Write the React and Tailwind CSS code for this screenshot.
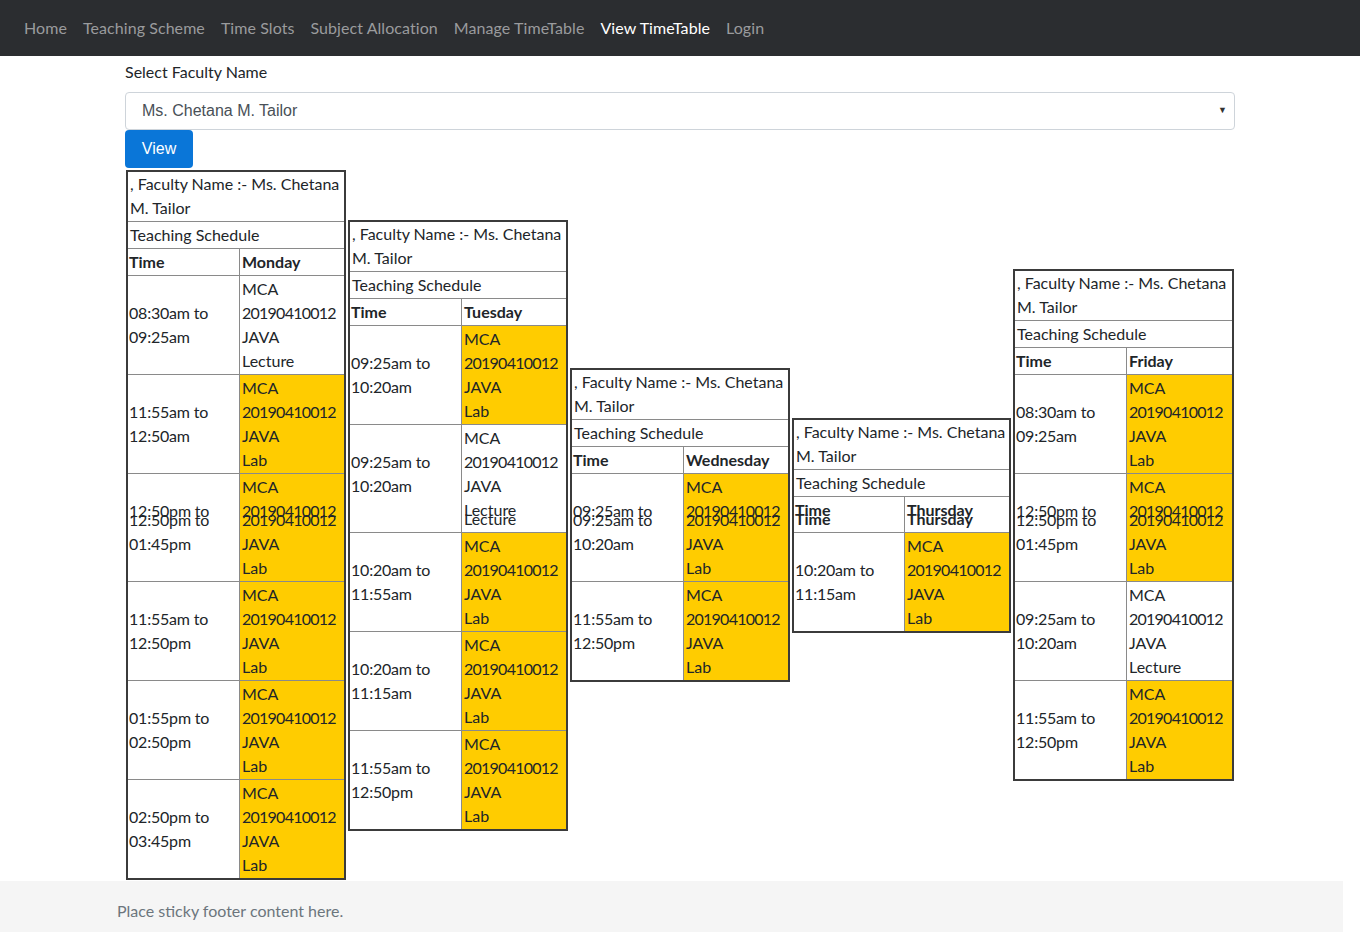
import React from "react";

const navItems = ["Home", "Teaching Scheme", "Time Slots", "Subject Allocation", "Manage TimeTable", "View TimeTable", "Login"];

const lecture = ["MCA", "20190410012", "JAVA", "Lecture"];
const lab = ["MCA", "20190410012", "JAVA", "Lab"];

const days = [
  {
    day: "Monday", w: "w-[220px]", tw: "w-[112px]",
    rows: [
      { time: ["08:30am to", "09:25am"], sub: lecture },
      { time: ["11:55am to", "12:50am"], sub: lab, yellow: true },
      { time: ["12:50pm to", "01:45pm"], sub: lab, yellow: true, dupTime: 0, dupSub: 1 },
      { time: ["11:55am to", "12:50pm"], sub: lab, yellow: true },
      { time: ["01:55pm to", "02:50pm"], sub: lab, yellow: true },
      { time: ["02:50pm to", "03:45pm"], sub: lab, yellow: true },
    ],
  },
  {
    day: "Tuesday", w: "w-[220px]", tw: "w-[112px]",
    rows: [
      { time: ["09:25am to", "10:20am"], sub: lab, yellow: true },
      { time: ["09:25am to", "10:20am"], sub: lecture, dupSub: 3, lift: true },
      { time: ["10:20am to", "11:55am"], sub: lab, yellow: true },
      { time: ["10:20am to", "11:15am"], sub: lab, yellow: true },
      { time: ["11:55am to", "12:50pm"], sub: lab, yellow: true },
    ],
  },
  {
    day: "Wednesday", w: "w-[220px]", tw: "w-[112px]",
    rows: [
      { time: ["09:25am to", "10:20am"], sub: lab, yellow: true, dupTime: 0, dupSub: 1 },
      { time: ["11:55am to", "12:50pm"], sub: lab, yellow: true },
    ],
  },
  {
    day: "Thursday", w: "w-[219px]", tw: "w-[111px]", dupHead: true,
    rows: [
      { time: ["10:20am to", "11:15am"], sub: lab, yellow: true },
    ],
  },
  {
    day: "Friday", w: "w-[221px]", tw: "w-[112px]",
    rows: [
      { time: ["08:30am to", "09:25am"], sub: lab, yellow: true },
      { time: ["12:50pm to", "01:45pm"], sub: lab, yellow: true, dupTime: 0, dupSub: 1 },
      { time: ["09:25am to", "10:20am"], sub: lecture },
      { time: ["11:55am to", "12:50pm"], sub: lab, yellow: true },
    ],
  },
];

// renders lines; the one at index `dup` is printed twice, overlapping (like the original page)
function Lines({ items, dup }) {
  return items.map((t, i) => {
    const cls = /^\d+$/.test(t) ? "tracking-[-0.75px]" : /\d/.test(t) ? "tracking-[-0.2px]" : "";
    return (
      <React.Fragment key={i}>
        <div className={cls}>{t}</div>
        {dup === i && <div className={`-mt-[15px] ${cls}`}>{t}</div>}
      </React.Fragment>
    );
  });
}

function DayTable({ data }) {
  return (
    <div className={`${data.w} shrink-0 border-2 border-[#3b3b3b] bg-white leading-6`}>
      <div className="pl-[2px] pb-px border-b border-[#8a8a8a]">, Faculty Name :- Ms. Chetana M. Tailor</div>
      <div className="pl-[2px] py-px border-b border-[#8a8a8a]">Teaching Schedule</div>
      <div className="flex border-b border-[#8a8a8a] font-bold">
        <div className={`${data.tw} shrink-0 border-r border-[#8a8a8a] py-px pl-px`}>
          <Lines items={["Time"]} dup={data.dupHead ? 0 : -1} />
        </div>
        <div className="flex-1 py-px pl-[2px]">
          <Lines items={[data.day]} dup={data.dupHead ? 0 : -1} />
        </div>
      </div>
      {data.rows.map((r, i) => (
        <div key={i} className={`flex ${i < data.rows.length - 1 ? "border-b border-[#8a8a8a]" : ""}`}>
          <div className={`${data.tw} shrink-0 border-r border-[#8a8a8a] py-px pl-px flex flex-col justify-center ${r.lift ? "pb-[9px]" : ""}`}>
            <Lines items={r.time} dup={r.dupTime ?? -1} />
          </div>
          <div className={`flex-1 py-px pl-[2px] ${r.yellow ? "bg-[#ffcc00]" : ""}`}>
            <Lines items={r.sub} dup={r.dupSub ?? -1} />
          </div>
        </div>
      ))}
    </div>
  );
}

export default function App() {
  return (
    <div className="h-[932px] overflow-hidden bg-white text-[#212529] text-base [font-family:Lato,sans-serif]">
      {/* Navbar */}
      <nav className="h-14 bg-[#2b2d30] flex items-center px-4">
        {navItems.map((n) => (
          <a key={n} className={`px-2 tracking-[0.07px] ${n === "View TimeTable" ? "text-white" : "text-[#9a9b9d]"}`}>{n}</a>
        ))}
      </nav>

      <div className="w-[1110px] mx-auto pt-1">
        <label className="block leading-6 mb-2">Select Faculty Name</label>
        <div className="h-[38px] border border-[#ced4da] rounded flex items-center justify-between pl-[16px] pr-[7px] text-[#495057] [font-family:'Liberation_Sans',Arial,sans-serif]">
          <span>Ms. Chetana M. Tailor</span>
          <span className="text-[9px] text-[#333]">▼</span>
        </div>
        <button className="h-[38px] w-[68px] rounded bg-[#0a76d8] text-white [font-family:'Liberation_Sans',Arial,sans-serif]">View</button>

        <div className="flex items-center gap-[2px] pl-px mt-[2px]">
          {days.map((d) => (
            <DayTable key={d.day} data={d} />
          ))}
        </div>
      </div>

      {/* Footer */}
      <footer className="mt-px h-[60px] w-[1343px] bg-[#f5f5f5]">
        <div className="pl-[117px] leading-[60px] text-[#6c757d]">Place sticky footer content here.</div>
      </footer>
    </div>
  );
}
